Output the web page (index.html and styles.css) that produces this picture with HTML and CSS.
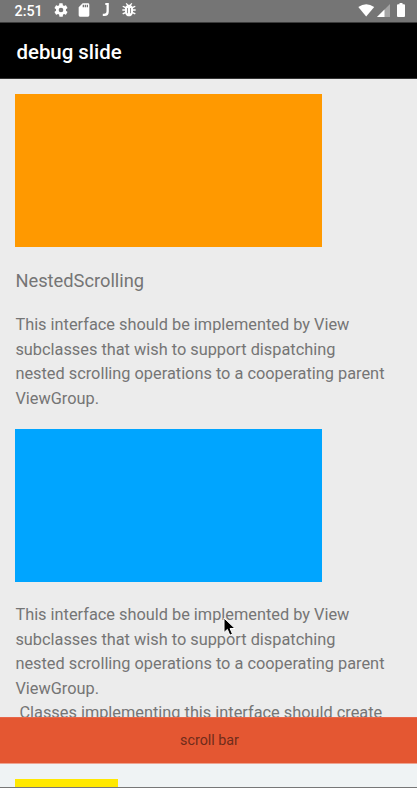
FILE: index.html
```html
<!DOCTYPE html>
<html lang="en">
<head>
<meta charset="utf-8">
<title>debug slide</title>
<link rel="stylesheet" href="styles.css">
</head>
<body>
<div class="screen">
  <header class="status">
    <span class="time">2:51</span>
    <svg class="gear" width="16" height="16" viewBox="0 0 24 24"><path fill-rule="evenodd" d="M19.4 13c.1-.7.1-1.300 0-2l2.100-1.600c.2-.2.3-.5.1-.7l-2-3.400c-.1-.3-.4-.3-.6-.3l-2.500 1c-.5-.4-1.100-.7-1.700-1l-.4-2.600c0-.2-.2-.4-.5-.4h-4c-.2 0-.4.2-.5.4L9.200 5c-.6.3-1.200.6-1.700 1L5 5c-.2-.1-.5 0-.6.3l-2 3.400c-.2.2-.1.5.1.7L4.600 11c-.1.700-.1 1.300 0 2l-2.100 1.600c-.2.2-.3.500-.1.7l2 3.400c.1.3.4.3.6.3l2.500-1c.5.4 1.100.7 1.700 1l.4 2.600c.1.2.3.4.5.4h4c.3 0 .5-.2.500-.4L15 19c.6-.3 1.200-.6 1.700-1l2.300 1c.2.100.5 0 .6-.3l2-3.400c.2-.2.1-.5-.1-.7ZM12 15.500a3.500 3.500 0 1 1 0-7 3.500 3.500 0 0 1 0 7Z"/></svg>
    <svg class="sd" width="16" height="16" viewBox="0 0 24 24"><path fill-rule="evenodd" d="M18 2h-8L4 8v12q0 2 2 2h12q2 0 2-2V4q0-2-2-2ZM12 8h-2V4h2Zm3 0h-2V4h2Zm3 0h-2V4h2Z"/></svg>
    <svg class="jay" width="8" height="14" viewBox="0 0 8 14"><path d="M3.300 0H6.800v8.500Q6.800 13 2.500 13H.8v-2.300H2Q4.500 10.700 4.500 8V2H3.300Z"/></svg>
    <svg class="bug" width="16" height="16" viewBox="0 0 24 24"><path fill-rule="evenodd" d="M7 2.800 8.400 1.400 11 4h2l2.600-2.600L17 2.800l-2 2c1 .7 1.800 1.500 2.300 2.400L21 5.500l.8 1.800L18 9.300V11h4v2h-4v2l4 2-1 1.800-3.400-1.700C16.500 20 14.500 21.500 12 21.500S7.500 20 6.400 17.100L3 18.800 2 17l4-2v-2H2v-2h4V9.300l-3.800-2L3 5.500l3.700 1.700C7.200 6.300 8 5.500 9 4.800ZM9.200 9v8h1.200V9Zm4.400 0v8h1.200V9Z"/></svg>
    <svg class="wifi" width="17" height="13" viewBox="0 0 17 13"><path d="M.3 3Q8.200-2.500 16.200 3L8.200 12.600Z"/></svg>
    <svg class="signal" width="13" height="13" viewBox="0 0 13 13"><path d="M0 13 13 0v13Z" opacity=".35"/><path d="M0 13 7.500 5.500V13Z"/></svg>
    <svg class="battery" width="8" height="14" viewBox="0 0 8 14"><path d="M2.500 0h3v1.300H7q1 0 1 1V13q0 1-1 1H1q-1 0-1-1V2.300q0-1 1-1h1.500Z"/></svg>
  </header>
  <div class="toolbar">debug slide</div>
  <main class="content">
    <div class="block orange"></div>
    <h2 class="heading">NestedScrolling</h2>
    <p class="copy">This interface should be implemented by View<br>subclasses that wish to support dispatching<br>nested scrolling operations to a cooperating parent<br>ViewGroup.</p>
    <div class="block blue"></div>
    <p class="copy second">This interface should be implemented by View<br>subclasses that wish to support dispatching<br>nested scrolling operations to a cooperating parent<br>ViewGroup.<br>&nbsp;Classes implementing this interface should create</p>
  </main>
  <div class="bar">scroll bar</div>
  <footer class="bottom"><div class="yellow"></div></footer>
  <svg class="cursor" width="14" height="21" viewBox="0 0 14 21"><path d="M1 1v14.500l3.400-3.100 2.400 5.800 2.700-1.100L7.100 11.500H12Z"/></svg>
</div>
</body>
</html>
```
FILE: styles.css
```css
* { box-sizing: border-box; }
body { margin: 0; font-family: Roboto, sans-serif; }
.screen {
  position: relative;
  display: flex;
  flex-direction: column;
  width: 417px;
  height: 788px;
  overflow: hidden;
  background: #ececec;
}
.status {
  display: flex;
  align-items: center;
  flex: 0 0 23px;
  height: 23px;
  padding: 0 12px 2px 14.500px;
  background: #757575;
  border-bottom: 1px solid #3c3c3c;
  color: #fff;
}
.status svg { fill: #fff; flex: none; }
.time { width: 38.500px; padding-top: 1px; font-size: 14.3px; font-weight: 500; line-height: 20px; }
.sd { margin-left: 7px; }
.jay { margin-left: 10px; }
.bug { margin-left: 11px; }
.wifi { margin-left: auto; }
.signal { margin-left: 2px; }
.battery { margin-left: 7px; }
.toolbar {
  flex: 0 0 56px;
  height: 56px;
  padding-left: 16.500px;
  background: #000;
  border-bottom: 1px solid #333;
  color: #fff;
  font-size: 20.4px;
  font-weight: 500;
  line-height: 58px;
}
.content {
  flex: 0 0 638px;
  height: 638px;
  padding: 15px 0 0 15.400px;
  overflow: hidden;
  color: #757575;
  white-space: nowrap;
}
.block { width: 306.300px; height: 153px; }
.orange { background: #ff9900; }
.blue { margin-top: 18px; background: #00a5ff; }
.heading { margin: 22px 0 0; font-size: 18.300px; font-weight: 400; line-height: 24px; }
.copy { margin: 20px 0 0; font-size: 16.330px; line-height: 24.500px; }
.second { margin-top: 21px; }
.bar {
  flex: 0 0 46px;
  border-top: 1px solid #e8664a;
  border-bottom: 1px solid #eda491;
  background: #e45732;
  color: #6f2c1b;
  font-size: 14.300px;
  line-height: 45px;
  text-align: center;
  padding-left: 2px;
}
.bottom {
  flex: 1;
  padding: 15px 0 0 15.400px;
  background: #eff3f4;
  border-bottom: 1px solid #777;
}
.yellow { width: 102.300px; height: 100%; background: #ffe800; }
.cursor { position: absolute; left: 223px; top: 617px; fill: #000; stroke: #fff; stroke-width: 1; }
```
